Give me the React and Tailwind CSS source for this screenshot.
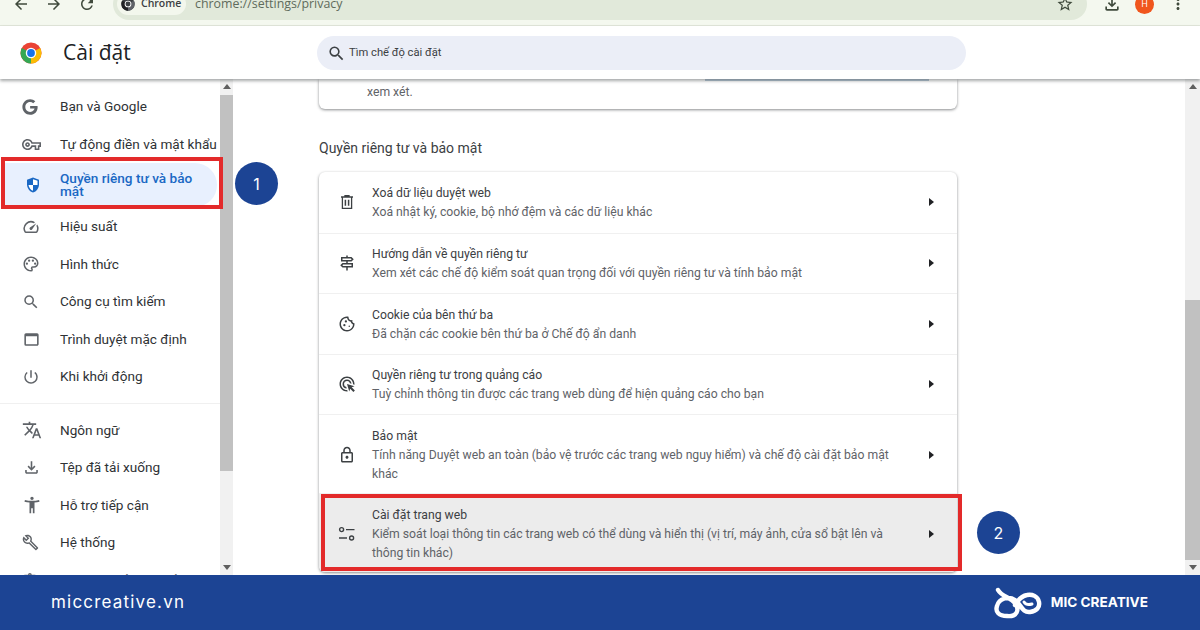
import {
  MdArrowBack,
  MdArrowForward,
  MdRefresh,
  MdStarBorder,
  MdMoreVert,
  MdOutlineFileDownload,
  MdSearch,
  MdOutlineVpnKey,
  MdOutlineSpeed,
  MdOutlinePalette,
  MdOutlineWebAsset,
  MdPowerSettingsNew,
  MdTranslate,
  MdAccessibilityNew,
  MdOutlineBuild,
  MdOutlineSignpost,
  MdOutlineCookie,
  MdOutlineAdsClick,
  MdOutlineLock,
  MdOutlineExtension,
} from "react-icons/md";
import { FaGoogle } from "react-icons/fa";

const ChromeLogo = ({ size = 22, mono = false }) => (
  <svg width={size} height={size} viewBox="0 0 48 48" className="shrink-0">
    <circle cx="24" cy="24" r="23" fill={mono ? "#3c4043" : "#ea4335"} />
    <path d="M24 24 L44 13 A23 23 0 0 1 24 47 Z" fill={mono ? "#5f6368" : "#fbbc04"} />
    <path d="M24 24 L24 47 A23 23 0 0 1 4 13 Z" fill={mono ? "#202124" : "#34a853"} />
    <circle cx="24" cy="24" r="11.5" fill="#fff" />
    <circle cx="24" cy="24" r="8.5" fill={mono ? "#3c4043" : "#1a73e8"} />
  </svg>
);

const ShieldIcon = () => (
  <svg width="18" height="18" viewBox="0 0 24 24" className="shrink-0">
    <path d="M12 2 4 5v6c0 5.2 3.4 9.8 8 11 4.6-1.2 8-5.8 8-11V5z" fill="#1a68c4" />
    <path d="M12 4.2 18 6.4V12h-6zM12 12v7.8c-3.2-1.1-5.6-4.4-6-7.8z" fill="#fff" />
  </svg>
);

const TrashIcon = () => (
  <svg width="18" height="18" viewBox="0 0 18 18" fill="none" stroke="#3c4043" strokeWidth="1.3">
    <path d="M3 4h12M7 4V2.6h4V4M4.4 4v11.4h9.2V4" />
    <path d="M7.4 6.8v6M10.6 6.8v6" strokeWidth="1.5" />
  </svg>
);

const TuneIcon = () => (
  <svg width="18" height="18" viewBox="0 0 18 18" fill="none" stroke="#3c4043" strokeWidth="1.4">
    <circle cx="3.6" cy="4.6" r="2" />
    <path d="M8 4.6h8.5M1 13h8" />
    <circle cx="13.6" cy="13" r="2" />
  </svg>
);

const RowArrow = () => (
  <svg width="5" height="8" viewBox="0 0 5 8" className="shrink-0">
    <path d="M0 0l5 4-5 4z" fill="#202124" />
  </svg>
);

const ScrollArrow = ({ down }) => (
  <svg width="8" height="5" viewBox="0 0 8 5">
    <path d={down ? "M0 0h8L4 5z" : "M0 5h8L4 0z"} fill="#5f5f5f" />
  </svg>
);

const Scrollbar = ({ width, thumbTop, thumbHeight }) => (
  <div className={`${width} shrink-0 bg-[#f1f1f1] flex flex-col items-center relative`}>
    <div className="h-[15px] flex items-center justify-center">
      <ScrollArrow />
    </div>
    <div className="flex-1 w-full">
      <div style={{ marginTop: thumbTop, height: thumbHeight }} className="bg-[#c1c1c1] w-full" />
    </div>
    <div className="h-[15px] flex items-center justify-center">
      <ScrollArrow down />
    </div>
  </div>
);

const navTop = [
  { label: "Bạn và Google", icon: <FaGoogle size={16} /> },
  { label: "Tự động điền và mật khẩu", icon: <MdOutlineVpnKey size={19} /> },
];

const navMid = [
  { label: "Hiệu suất", icon: <MdOutlineSpeed size={18} /> },
  { label: "Hình thức", icon: <MdOutlinePalette size={18} /> },
  { label: "Công cụ tìm kiếm", icon: <MdSearch size={18} /> },
  { label: "Trình duyệt mặc định", icon: <MdOutlineWebAsset size={19} /> },
  { label: "Khi khởi động", icon: <MdPowerSettingsNew size={18} /> },
];

const navBottom = [
  { label: "Ngôn ngữ", icon: <MdTranslate size={20} /> },
  { label: "Tệp đã tải xuống", icon: <MdOutlineFileDownload size={19} /> },
  { label: "Hỗ trợ tiếp cận", icon: <MdAccessibilityNew size={20} /> },
  { label: "Hệ thống", icon: <MdOutlineBuild size={17} /> },
  { label: "Tiện ích mở rộng của Chrome", icon: <MdOutlineExtension size={18} /> },
];

const NavItem = ({ item }) => (
  <div className="h-[37.5px] flex items-center shrink-0">
    <div className="w-[60px] pl-[22px] shrink-0 text-[#5f6368] flex items-center">{item.icon}</div>
    <span className="pb-px text-[13.6px] text-[#2f3235] whitespace-nowrap font-['Roboto',sans-serif]">{item.label}</span>
  </div>
);

const settingsRows = [
  {
    title: "Xoá dữ liệu duyệt web",
    sub: "Xoá nhật ký, cookie, bộ nhớ đệm và các dữ liệu khác",
    icon: <TrashIcon />,
  },
  {
    title: "Hướng dẫn về quyền riêng tư",
    sub: "Xem xét các chế độ kiểm soát quan trọng đối với quyền riêng tư và tính bảo mật",
    icon: <MdOutlineSignpost size={18} />,
  },
  {
    title: "Cookie của bên thứ ba",
    sub: "Đã chặn các cookie bên thứ ba ở Chế độ ẩn danh",
    icon: <MdOutlineCookie size={18} />,
  },
  {
    title: "Quyền riêng tư trong quảng cáo",
    sub: "Tuỳ chỉnh thông tin được các trang web dùng để hiện quảng cáo cho bạn",
    icon: <MdOutlineAdsClick size={18} />,
  },
  {
    title: "Bảo mật",
    sub: "Tính năng Duyệt web an toàn (bảo vệ trước các trang web nguy hiểm) và chế độ cài đặt bảo mật khác",
    icon: <MdOutlineLock size={18} />,
    tall: true,
  },
  {
    title: "Cài đặt trang web",
    sub: "Kiểm soát loại thông tin các trang web có thể dùng và hiển thị (vị trí, máy ảnh, cửa sổ bật lên và thông tin khác)",
    icon: <TuneIcon />,
    tall: true,
    active: true,
  },
];

const SettingsRow = ({ row, first }) => (
  <div
    className={`flex items-center shrink-0 ${row.tall ? "h-[79px] pt-px" : "h-[60.5px]"} ${first ? "" : "border-t border-[#f0f0f0]"} ${row.active ? "bg-[#ececec]" : ""}`}
  >
    <div className="w-[53px] pl-[19px] shrink-0 text-[#3c4043] flex items-center">{row.icon}</div>
    <div className="w-[540px] shrink-0 pt-[2px] font-['Roboto',sans-serif] text-[12.2px] leading-[19px]">
      <div className="text-[#3c4043]">{row.title}</div>
      <div className="text-[#5f6368]">{row.sub}</div>
    </div>
    <div className="flex-1 flex pl-[17px]">
      <RowArrow />
    </div>
  </div>
);

const Badge = ({ className, children }) => (
  <div
    className={`absolute w-[43px] h-[43px] rounded-full bg-[#1c4494] text-white text-[16px] font-['Inter',sans-serif] flex items-center justify-center ${className}`}
  >
    {children}
  </div>
);

const MicLogo = () => (
  <svg width="48" height="32" viewBox="0 0 48 32" fill="none" stroke="#fff" strokeWidth="4.4" strokeLinecap="round" className="shrink-0">
    <path d="M4 3C8 10 16 10 21 16C26 23 23 30 13 29C5 29 1 25 3 19C5 11 15 9 21 13C27 17 28 26 36 25C43 24 46 20 45 15C44 9 38 7 33 8C27 9 24 13 21 18" />
    <path d="M30 15c2 3 5 3 8 2" strokeWidth="3" />
  </svg>
);

export default function App() {
  return (
    <div className="w-[1200px] h-[630px] overflow-hidden flex flex-col bg-white relative font-['Open_Sans',sans-serif]">
      {/* toolbar, cut off at the top of the picture */}
      <div className="h-[26px] shrink-0 overflow-hidden bg-[#f4f8ef] border-b border-[#e2e7db]">
        <div className="-mt-[12px] h-[32px] flex items-center text-[#3f4a3c]">
          <div className="flex items-center gap-[15px] pl-[12px] w-[113px] shrink-0">
            <MdArrowBack size={18} />
            <MdArrowForward size={18} />
            <MdRefresh size={18} />
          </div>
          <div className="w-[974px] h-[32px] rounded-full bg-[#e1e9da] flex items-center pl-[4px] shrink-0">
            <div className="h-[22px] w-[69px] rounded-full bg-[#f3f7ed] flex items-center gap-[6px] pl-[4px] text-[10.5px] font-semibold text-[#3c4043]">
              <ChromeLogo size={14} mono />
              Chrome
            </div>
            <span className="ml-[9px] text-[12.4px] text-[#5f6b5c]">chrome://settings/privacy</span>
            <div className="ml-auto mr-[13px]">
              <MdStarBorder size={18} />
            </div>
          </div>
          <div className="flex items-center pl-[15px]">
            <MdOutlineFileDownload size={20} />
            <div className="ml-[13px] w-[19px] h-[19px] rounded-full bg-[#f0561d] text-white text-[9px] flex items-center justify-center">
              H
            </div>
            <div className="ml-[15px]">
              <MdMoreVert size={18} />
            </div>
          </div>
        </div>
      </div>

      {/* settings header */}
      <div className="h-[53px] pt-px shrink-0 bg-white flex items-center relative z-10 shadow-[0_2px_3px_rgba(60,64,67,0.45)]">
        <div className="w-[63px] pl-[20px] shrink-0">
          <ChromeLogo size={22} />
        </div>
        <div className="w-[254px] shrink-0 text-[21px] font-medium text-[#202124]">Cài đặt</div>
        <div className="w-[649px] h-[34px] rounded-full bg-[#ebeef7] flex items-center pl-[10px] gap-[3px]">
          <MdSearch size={19} className="text-[#3c4043]" />
          <span className="text-[11.2px] text-[#3c4043] font-['Roboto',sans-serif]">Tìm chế độ cài đặt</span>
        </div>
      </div>

      {/* page body */}
      <div className="flex-1 min-h-0 flex relative">
        <div className="w-[220px] shrink-0 flex flex-col pt-[9px] overflow-hidden">
          {navTop.map((item) => (
            <NavItem key={item.label} item={item} />
          ))}
          <div className="h-[44px] shrink-0 mx-[3px] mb-[1px] flex items-center rounded-r-full bg-[#e8f0fe]">
            <div className="w-[57px] pl-[21px] shrink-0">
              <ShieldIcon />
            </div>
            <span className="text-[13.6px] leading-[13px] font-medium text-[#1a68c4] w-[140px] font-['Roboto',sans-serif]">Quyền riêng tư và bảo mật</span>
          </div>
          {navMid.map((item) => (
            <NavItem key={item.label} item={item} />
          ))}
          <div className="h-px bg-[#f0f0f0] shrink-0 mt-[7px] mb-[8px]" />
          {navBottom.map((item) => (
            <NavItem key={item.label} item={item} />
          ))}
        </div>
        <Scrollbar width="w-[13px]" thumbTop={1} thumbHeight={376} />

        <div className="flex-1 min-w-0 overflow-hidden pl-[86px]">
          <div className="w-[638px] h-[30px] rounded-b-[6px] bg-white shadow-[0_1px_3px_rgba(60,64,67,0.6)] pl-[48px] relative">
            <div className="absolute right-[28px] top-0 w-[224px] h-[2px] bg-[#b4c6d6]" />
            <div className="text-[12.2px] leading-[18px] pt-[4px] text-[#5f6368] font-['Roboto',sans-serif]">xem xét.</div>
          </div>
          <div className="text-[14px] text-[#3c4043] mt-[30px] h-[19px] leading-[19px] font-['Roboto',sans-serif]">Quyền riêng tư và bảo mật</div>
          <div className="mt-[14px] w-[638px] rounded-[6px] bg-white shadow-[0_1px_3px_rgba(60,64,67,0.6)] overflow-hidden flex flex-col">
            {settingsRows.map((row, i) => (
              <SettingsRow key={row.title} row={row} first={i === 0} />
            ))}
          </div>
        </div>
        <Scrollbar width="w-[15px]" thumbTop={206} thumbHeight={260} />
      </div>

      {/* brand footer */}
      <div className="h-[55px] shrink-0 bg-[#1c4494] flex items-center justify-between pl-[51px] pr-[52px] relative z-10">
        <span className="text-white text-[17px] tracking-[0.07em] font-['Inter',sans-serif]">miccreative.vn</span>
        <div className="flex items-center gap-[9px]">
          <MicLogo />
          <span className="text-white text-[13.6px] font-bold font-['Inter',sans-serif]">MIC CREATIVE</span>
        </div>
      </div>

      {/* annotations on top of the screenshot */}
      <div className="absolute left-[1px] top-[157px] w-[222px] h-[52px] border-[4px] border-[#e32a2a]" />
      <div className="absolute left-[321px] top-[494px] w-[641px] h-[77px] border-[4px] border-[#e32a2a]" />
      <Badge className="left-[235px] top-[162px]">1</Badge>
      <Badge className="left-[977px] top-[511px]">2</Badge>
    </div>
  );
}
